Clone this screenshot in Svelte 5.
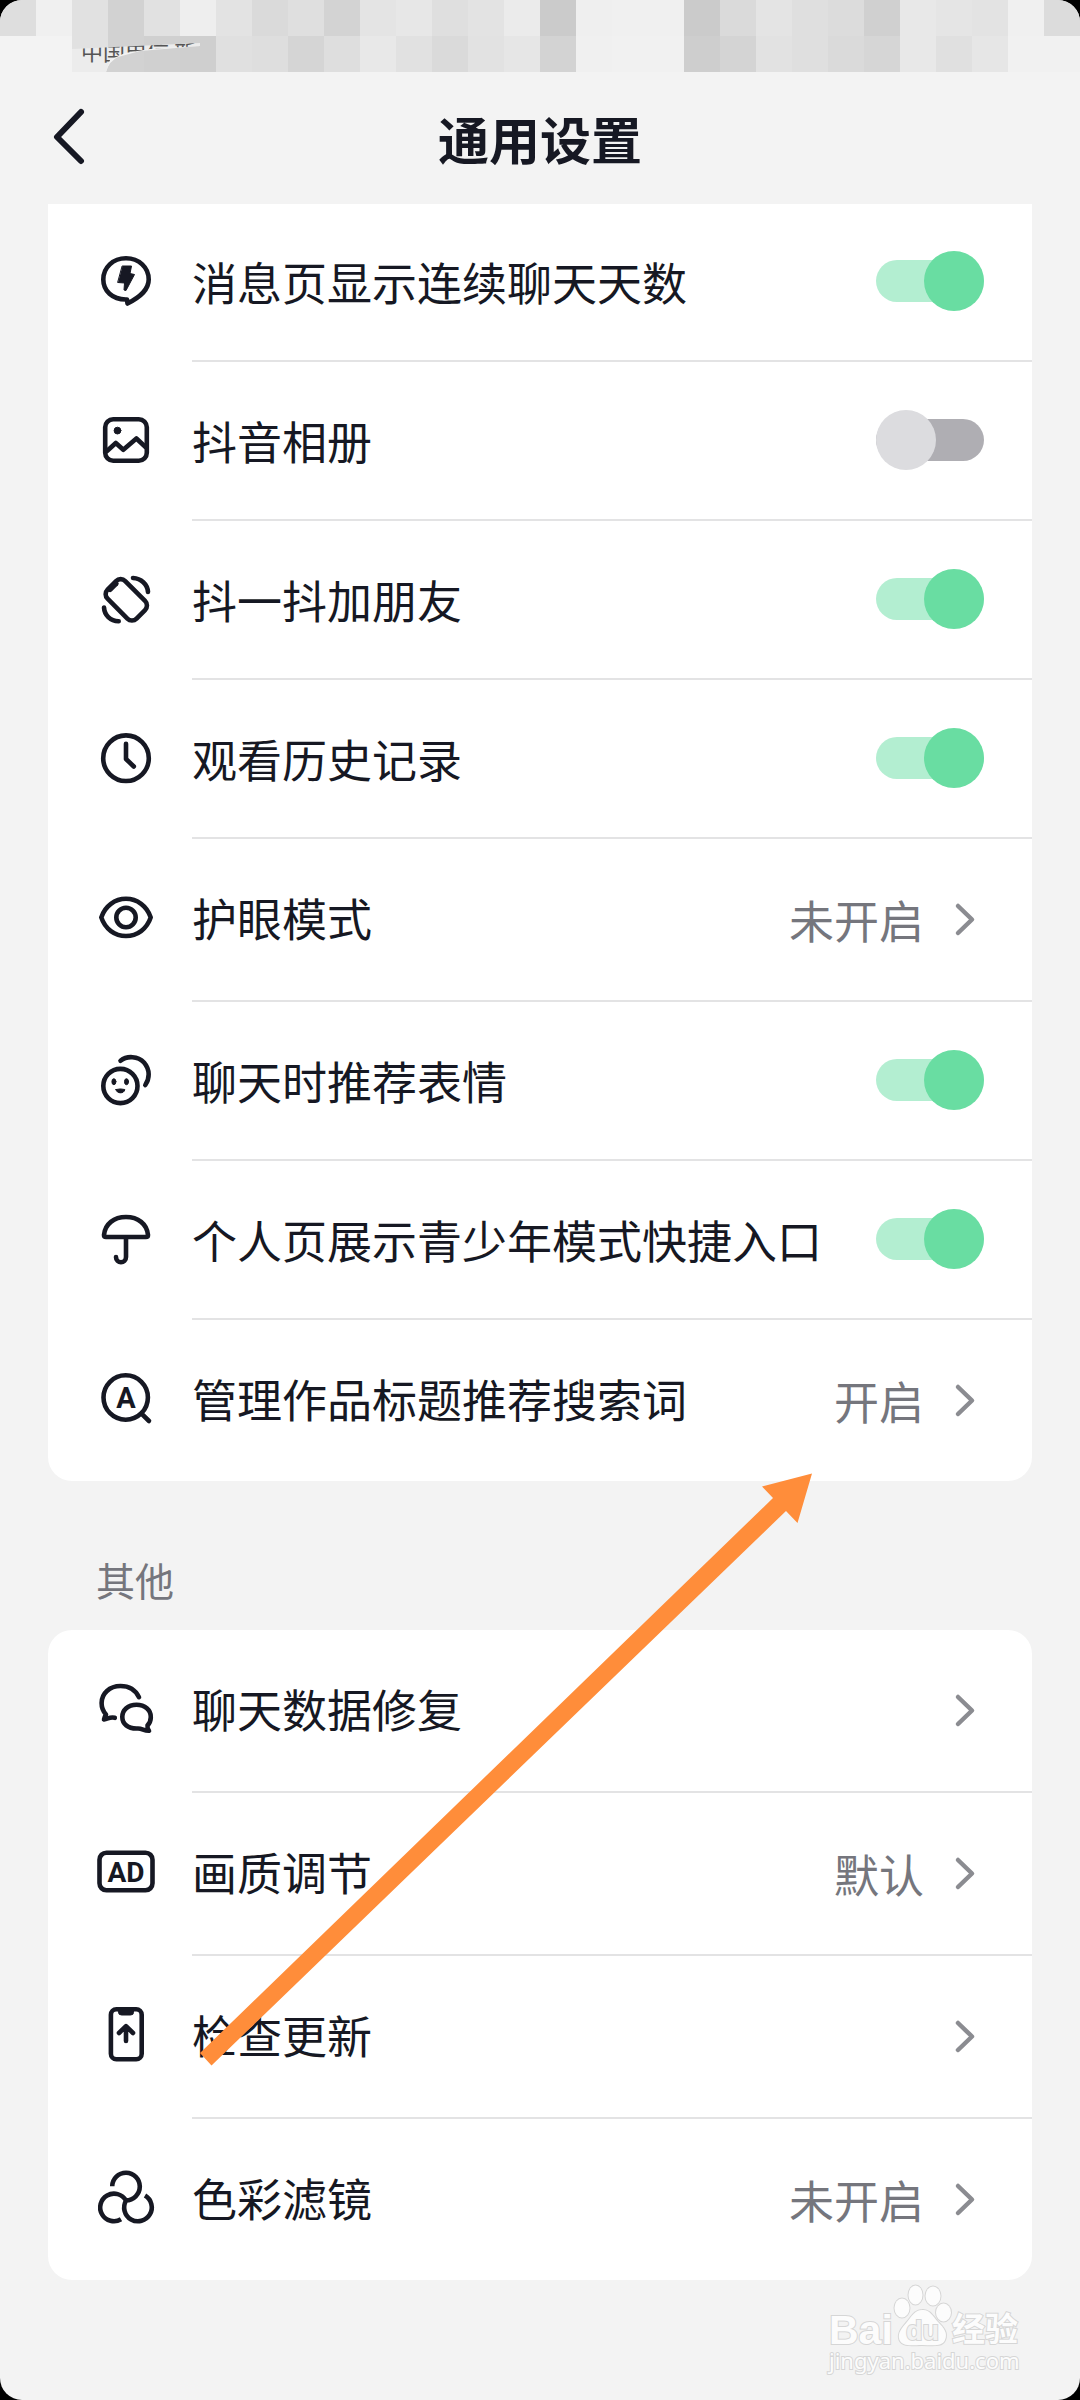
<script>
  const mosaicTop = ['#dedede', '#f0f0f0', '#e1e1e1', '#d2d2d2', '#e1e1e1', '#eeeeee', '#e3e3e3', '#dadada', '#dfdfdf', '#d3d3d3', '#e4e4e4', '#e7e7e7', '#dfdfdf', '#e3e3e3', '#ebebeb', '#cbcbcb', '#efefef', '#f0f0f0', '#f0f0f0', '#cbcbcb', '#dadada', '#e4e4e4', '#dfdfdf', '#dcdcdc', '#d0d0d0', '#e8e8e8', '#e5e5e5', '#e3e3e3', '#f0f0f0', '#dcdcdc'];
  const mosaicBottom = ['#d2d2d2', '#d0d0d0', '#cfcfcf', '#e0e0e0', '#dedede', '#d5d5d5', '#dedede', '#e8e8e8', '#e1e1e1', '#dadada', '#e2e2e2', '#e6e6e6', '#d3d3d3', '#f0f0f0', '#f1f1f1', '#f1f1f1', '#cecece', '#d4d4d4', '#e2e2e2', '#dfdfdf', '#dadada', '#d6d6d6', '#e8e8e8', '#e0e0e0', '#e6e6e6', '#f1f1f1', '#f1f1f1'];

  let general = $state([
    { icon: 'bolt', label: '消息页显示连续聊天天数', toggle: true, on: true },
    { icon: 'album', label: '抖音相册', toggle: true, on: false },
    { icon: 'shake', label: '抖一抖加朋友', toggle: true, on: true },
    { icon: 'clock', label: '观看历史记录', toggle: true, on: true },
    { icon: 'eye', label: '护眼模式', value: '未开启' },
    { icon: 'emoji', label: '聊天时推荐表情', toggle: true, on: true },
    { icon: 'umbrella', label: '个人页展示青少年模式快捷入口', toggle: true, on: true },
    { icon: 'search', label: '管理作品标题推荐搜索词', value: '开启' }
  ]);
  const other = [
    { icon: 'chat', label: '聊天数据修复' },
    { icon: 'ad', label: '画质调节', value: '默认' },
    { icon: 'update', label: '检查更新' },
    { icon: 'filter', label: '色彩滤镜', value: '未开启' }
  ];
</script>

{#snippet glyph(name)}
  <svg class="icon" viewBox="0 0 60 60" aria-hidden="true">
    {#if name === 'bolt'}
      <path d="M31 47.5C16 48 7.3 38.500 7.3 27.5C7.3 15.500 17 6.3 30 6.3S52.7 15.500 52.7 27.5C52.7 37.500 45 44.500 31.5 51.500Z" />
      <path class="solid" d="M26.5 14H35.5L34 21.5L38.5 22.5L30 38.5L28 38L28.5 31L22 30.5Z" />
    {:else if name === 'album'}
      <rect x="9.2" y="8.2" width="41.6" height="41.6" rx="8" />
      <circle class="solid" cx="21.5" cy="19.6" r="3.4" />
      <path d="M11 40L19.8 32L27.3 38.8L40.4 27.5L49.5 36" />
    {:else if name === 'shake'}
      <rect x="-12.5" y="-20.5" width="25" height="41" rx="6.5" transform="translate(30.3 29.8) rotate(-45)" />
      <path d="M-4.5 -18.5H4.5" transform="translate(30.3 29.8) rotate(-45)" />
      <path d="M37 8C45 8.5 51.5 14 52 22M8 37.5C8.5 45 14 51 22.7 51.2" />
    {:else if name === 'clock'}
      <circle cx="30" cy="29.2" r="22.8" />
      <path d="M30 14.8V30L37.8 37.5" />
    {:else if name === 'eye'}
      <path d="M5.3 27.4C9 16 19 8.8 30 8.8S51 16 54.7 27.4C51 39 41 46 30 46S9 39 5.3 27.4Z" />
      <circle cx="30" cy="27.5" r="9.7" />
    {:else if name === 'emoji'}
      <circle cx="24.4" cy="35" r="17.1" />
      <ellipse class="solid" cx="17.9" cy="30.7" rx="2" ry="3" />
      <ellipse class="solid" cx="30.5" cy="30.7" rx="2" ry="3" />
      <path class="solid" d="M20 38.5Q24.4 37.3 28.8 38.5C28.5 43 20.3 43 20 38.5Z" />
      <path d="M24.5 9.7C31 4.5 42 5 48 11.5C54.5 19 53.5 28 49.3 34" />
    {:else if name === 'umbrella'}
      <path d="M8 25C9 14 18 7 30 7S51 14 52 25Q52 27 50 27H10Q8 27 8 25ZM30 27V47C30 54 20 54 20 47" />
    {:else if name === 'search'}
      <circle cx="29.7" cy="26.5" r="22.2" />
      <path d="M45.5 42.7L53 50" />
      <text x="29.9" y="37" font-size="29">A</text>
    {:else if name === 'chat'}
      <path d="M43 16.2C39.5 9 32.5 5 24.5 5C13.5 5 5.6 12.5 5.6 22C5.6 26.5 7.3 30.5 10 33.5Q8.8 35.5 8 38.5C12 38 14 35.5 18.8 36.8" />
      <path d="M53 49.8C48 50 46.5 47.5 42 47.5H40.5C32 47.5 26.3 43 26.3 36C26.3 29 32 23.8 40.5 23.8S54.8 29 54.8 36C54.8 39.5 53.5 42.5 51.5 44.5Q51 47 53 49.8Z" />
    {:else if name === 'ad'}
      <rect x="3.5" y="8.7" width="53" height="37.6" rx="7" />
      <text x="30" y="37.6" font-size="28">AD</text>
    {:else if name === 'update'}
      <rect x="14.9" y="2.3" width="30.8" height="50" rx="5.5" />
      <path class="solid" d="M22.5 3H37.5V5.5Q37.5 8 34.5 8H25.5Q22.5 8 22.5 5.5Z" />
      <path d="M30 34V19.5M23 26L30 19.2L37 26" />
    {:else if name === 'filter'}
      <path d="M16.2 16.3A13.8 13.8 0 1 1 30 30.3M25 49.3A13.8 13.8 0 1 1 30 30.6M49 25.6A13.8 13.8 0 1 1 30 30.6" stroke-linecap="butt" />
    {/if}
  </svg>
{/snippet}

{#snippet nav(item)}
  <button class="row nav" type="button">
    {@render glyph(item.icon)}
    <span class="body">
      <span class="label">{item.label}</span>
      {#if item.value}<span class="value">{item.value}</span>{/if}
      <svg class="chevron" viewBox="0 0 36 36" aria-hidden="true"><path d="M10 4L24 17.500L10 31" /></svg>
    </span>
  </button>
{/snippet}

<div class="page">
  <svg class="status" viewBox="0 0 1080 76" aria-hidden="true">
    <defs>
      <clipPath id="carrier"><path d="M72 49L200 43V46L150 49L125 53L110 60L106 72H72Z" /></clipPath>
      <clipPath id="smudge"><path d="M112 36H1080V72H106Q109 61 118 57L140 51L200 46L112 49Z" /></clipPath>
    </defs>
    {#each mosaicTop as fill, i}
      <rect x={i * 36} y="0" width="36" height={i === 2 ? 50 : i === 3 ? 49 : 36} {fill} />
    {/each}
    <path d="M108 36H216V43L108 49Z" fill="#d2d2d2" />
    <g clip-path="url(#smudge)">
      {#each mosaicBottom as fill, i}
        <rect x={106 + i * 36 + (i ? 2 : 0)} y="36" width={i ? 36 : 38} height="36" {fill} />
      {/each}
    </g>
    <g clip-path="url(#carrier)">
      <rect x="72" y="40" width="130" height="34" fill="#ececec" />
      <text x="81" y="60" font-size="22">中国电信 新</text>
    </g>
  </svg>

  <header>
    <button class="back" type="button" aria-label="返回">
      <svg viewBox="0 0 60 60" aria-hidden="true"><path d="M33 4L9 29L33 53" /></svg>
    </button>
    <h1>通用设置</h1>
  </header>

  <main>
    <section class="card first">
      {#each general as item}
        {#if item.toggle}
          <label class="row">
            {@render glyph(item.icon)}
            <span class="body">
              <span class="label">{item.label}</span>
              <input type="checkbox" role="switch" bind:checked={item.on} />
            </span>
          </label>
        {:else}
          {@render nav(item)}
        {/if}
      {/each}
    </section>

    <h2>其他</h2>
    <section class="card">
      {#each other as item}
        {@render nav(item)}
      {/each}
    </section>
  </main>

  <svg class="pointer" viewBox="0 0 614 594" aria-hidden="true">
    <path d="M612 1.500L562 14.500L573 26L0 581L11.500 593.500L586 39L597.500 51Z" />
  </svg>

  <svg class="watermark" viewBox="0 0 200 100" role="img" aria-label="Baidu 经验">
    <text class="brand" x="3" y="61" font-size="41">Bai</text>
    <ellipse cx="76" cy="25" rx="7.500" ry="9.500" />
    <ellipse cx="89.500" cy="12" rx="7" ry="9.500" />
    <ellipse cx="107" cy="13" rx="7.500" ry="9.500" />
    <ellipse cx="117.500" cy="29.500" rx="7.500" ry="9" />
    <path d="M96 27C103 26 107 33 112 39C118 45 122 50 119 57C116 64 107 62 96 62S77 64 73.500 57C71 50 76 45 81 39C86 33 89 27 96 27Z" />
    <text class="du" x="80" y="57" font-size="27">du</text>
    <text class="exp" x="126" y="58" font-size="33">经验</text>
    <text class="url" x="3" y="86" font-size="22">jingyan.baidu.com</text>
  </svg>
</div>

<style>
  :global(body) {
    margin: 0;
    background: #000;
  }
  .page {
    position: relative;
    box-sizing: border-box;
    min-height: 100vh;
    padding-bottom: 120px;
    overflow: hidden;
    border-radius: 22px;
    background: #f3f3f3;
    color: #161823;
    font-family: 'Noto Sans CJK SC', sans-serif;
  }
  .status {
    display: block;
    width: 100%;
  }
  .status text {
    fill: #555;
  }
  header {
    display: grid;
    grid-template-columns: 60px 1fr 60px;
    align-items: center;
    box-sizing: border-box;
    height: 128px;
    padding: 0 48px 4px;
  }
  button {
    margin: 0;
    padding: 0;
    border: 0;
    background: none;
    color: inherit;
    font: inherit;
    text-align: left;
  }
  .back svg {
    display: block;
    width: 60px;
    height: 60px;
    fill: none;
    stroke: #161823;
    stroke-width: 6;
    stroke-linecap: round;
    stroke-linejoin: round;
  }
  h1 {
    margin: 0;
    font-size: 51px;
    line-height: 72px;
    font-weight: 700;
    text-align: center;
  }
  main {
    padding: 0 48px;
  }
  .card {
    overflow: hidden;
    border-radius: 24px;
    background: #fff;
  }
  .first {
    border-radius: 0 0 24px 24px;
  }
  .row {
    display: flex;
    align-items: stretch;
    box-sizing: border-box;
    width: 100%;
    height: 159px;
    padding-left: 48px;
  }
  .nav {
    height: 163px;
  }
  .first .row:first-child {
    height: 158px;
  }
  .row:last-child {
    height: 161px;
  }
  .icon {
    flex: none;
    align-self: center;
    width: 60px;
    height: 60px;
    margin: 0 36px 2px 0;
    fill: none;
    stroke: #161823;
    stroke-width: 4.600;
    stroke-linecap: round;
    stroke-linejoin: round;
  }
  .row:last-child .icon {
    margin-bottom: 0;
  }
  .icon .solid {
    fill: #161823;
    stroke-width: 1;
  }
  .icon text {
    fill: #161823;
    stroke: none;
    font-family: Roboto, sans-serif;
    font-weight: 700;
    text-anchor: middle;
  }
  .body {
    display: flex;
    flex: 1;
    align-items: center;
    min-width: 0;
    padding-right: 48px;
    border-bottom: 2px solid #e3e3e4;
  }
  .row:last-child .body {
    border-bottom: 0;
  }
  .label {
    flex: 1;
    font-size: 45px;
    line-height: 64px;
    white-space: nowrap;
  }
  .nav .label {
    padding-bottom: 4px;
  }
  .value {
    margin-right: 24px;
    color: #75767d;
    font-size: 45px;
    line-height: 64px;
  }
  .chevron {
    flex: none;
    width: 36px;
    height: 36px;
    fill: none;
    stroke: #8b8c91;
    stroke-width: 4.500;
    stroke-linecap: round;
    stroke-linejoin: round;
  }
  input {
    flex: none;
    display: flex;
    align-items: center;
    appearance: none;
    position: relative;
    width: 108px;
    height: 60px;
    margin: 0 0 2px;
  }
  input::before {
    content: '';
    width: 100%;
    height: 42px;
    border-radius: 21px;
    background: #afaeb3;
  }
  input::after {
    content: '';
    position: absolute;
    top: 0;
    left: 0;
    width: 60px;
    height: 60px;
    border-radius: 50%;
    background: #dcdcdf;
  }
  input:checked::before {
    background: #b3eed1;
  }
  input:checked::after {
    right: 0;
    left: auto;
    background: #69dda2;
  }
  h2 {
    margin: 0;
    padding: 70px 48px 23px;
    color: #75767d;
    font-size: 39px;
    line-height: 56px;
    font-weight: 400;
  }
  .pointer {
    position: absolute;
    top: 1472px;
    left: 200px;
    width: 614px;
    height: 594px;
    fill: #ff8d3a;
    pointer-events: none;
  }
  .watermark {
    position: absolute;
    right: 54px;
    bottom: 17px;
    width: 200px;
    height: 100px;
    fill: #fcfcfc;
    stroke: #d6d6d6;
    stroke-width: 2;
    paint-order: stroke;
    pointer-events: none;
  }
  .watermark text {
    font-family: 'Liberation Sans', 'Noto Sans CJK SC', sans-serif;
    font-weight: 700;
  }
  .watermark .du {
    fill: #f2f2f2;
  }
  .watermark .url {
    font-family: 'Noto Sans', sans-serif;
    font-weight: 400;
  }
</style>
